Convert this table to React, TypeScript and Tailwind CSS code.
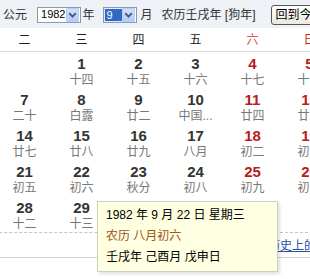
import React from "react";

type Cell = [number, string] | null;

const weekdays = ["一", "二", "三", "四", "五", "六", "日"];

const rows: Cell[][] = [
  [null, null, [1, "十四"], [2, "十五"], [3, "十六"], [4, "十七"], [5, "十八"]],
  [[6, "十九"], [7, "二十"], [8, "白露"], [9, "廿二"], [10, "中国..."], [11, "廿四"], [12, "廿五"]],
  [[13, "廿六"], [14, "廿七"], [15, "廿八"], [16, "廿九"], [17, "八月"], [18, "初二"], [19, "初三"]],
  [[20, "初四"], [21, "初五"], [22, "初六"], [23, "秋分"], [24, "初八"], [25, "初九"], [26, "初十"]],
  [[27, "十一"], [28, "十二"], [29, "十三"], [30, "十四"], null, null, null],
];

function Chevron() {
  return (
    <svg width="9" height="6" viewBox="0 0 9 6">
      <path d="M1.2 1.2 L4.5 4.5 L7.8 1.2" fill="none" stroke="#4d6185" strokeWidth="2" />
    </svg>
  );
}

function ArrowButton() {
  return (
    <span className="w-[13px] h-[14px] mr-[1px] flex items-center justify-center bg-gradient-to-b from-[#d3e0fc] to-[#b6cbf6] border border-[#b9cdf5] rounded-[1px]">
      <Chevron />
    </span>
  );
}

export default function App() {
  return (
    <div className="relative w-[310px] h-[279px] overflow-hidden bg-white text-[#333] font-['Liberation_Sans','Noto_Sans_CJK_SC',sans-serif]">
      {/* toolbar */}
      <div className="h-[28px] bg-[#eef1f6] flex items-center whitespace-nowrap text-[12px] pt-[1px]">
        <span className="ml-[3px]">公元</span>
        <div className="ml-[10px] w-[47px] h-[16px] border border-[#7f9db9] bg-white flex items-center">
          <span className="flex-1 pl-[3px] text-[11px] leading-none text-black">1982</span>
          <ArrowButton />
        </div>
        <span className="ml-[2px]">年</span>
        <div className="ml-[8px] w-[37px] h-[16px] border border-[#7f9db9] bg-white flex items-center">
          <span className="ml-[1px] w-[17px] h-[12px] bg-[#316ac5] outline outline-1 outline-dotted outline-[#c9d8f3] text-white text-[11px] leading-[12px] pl-[2px]">
            9
          </span>
          <span className="flex-1" />
          <ArrowButton />
        </div>
        <span className="ml-[4px]">月</span>
        <span className="ml-[9px]">农历壬戌年 [狗年]</span>
        <button className="ml-[15px] h-[20px] px-[4px] border border-[#555] rounded-[3px] bg-gradient-to-b from-white to-[#ece9de] text-[12px] text-black leading-none">
          回到今天
        </button>
      </div>

      {/* calendar grid, Monday column sits just left of the visible area */}
      <div className="ml-[-61px] w-[399px]">
        <div className="grid grid-cols-[repeat(7,57px)] h-[24px] border-b border-[#dcdcdc] items-center text-[12px]">
          {weekdays.map((d, i) => (
            <div
              key={d}
              className={
                "text-center " +
                (i === 5 ? "text-[#d45a5a]" : i === 6 ? "text-[#c81e1e]" : "text-[#222]")
              }
            >
              {d}
            </div>
          ))}
        </div>
        <div className="border-b border-dashed border-[#c4c4c4]">
          {rows.map((row, r) => (
            <div key={r} className="grid grid-cols-[repeat(7,57px)] h-[36px]">
              {row.map((c, i) => (
                <div key={i} className="flex flex-col items-center pt-[3px]">
                  {c && (
                    <>
                      <span
                        className={
                          "text-[15px] font-bold leading-[18px] " +
                          (i >= 5 ? "text-[#b81c1c]" : "text-[#333]")
                        }
                      >
                        {c[0]}
                      </span>
                      <span className="text-[12px] leading-[15px] text-[#777] whitespace-nowrap">{c[1]}</span>
                    </>
                  )}
                </div>
              ))}
            </div>
          ))}
        </div>
      </div>

      {/* footer */}
      <div className="h-[25px] border-b border-[#d4d4d4] flex items-center pt-[2px] pl-[268px] whitespace-nowrap">
        <a className="text-[12px] text-[#2a4fa6] underline">历史上的今天</a>
      </div>

      {/* hover tooltip for the 22nd */}
      <div className="absolute left-[97px] top-[201px] w-[181px] h-[71px] bg-[#ffffe1] border border-[#cfcfc0] shadow-[2px_2px_3px_rgba(0,0,0,0.12)] pl-[8px] pt-[3px] text-[12px] leading-[21px] whitespace-nowrap">
        <div className="text-black">1982 年 9 月 22 日 星期三</div>
        <div className="text-[#a0521c]">农历 八月初六</div>
        <div className="text-black">壬戌年 己酉月 戊申日</div>
      </div>
    </div>
  );
}
